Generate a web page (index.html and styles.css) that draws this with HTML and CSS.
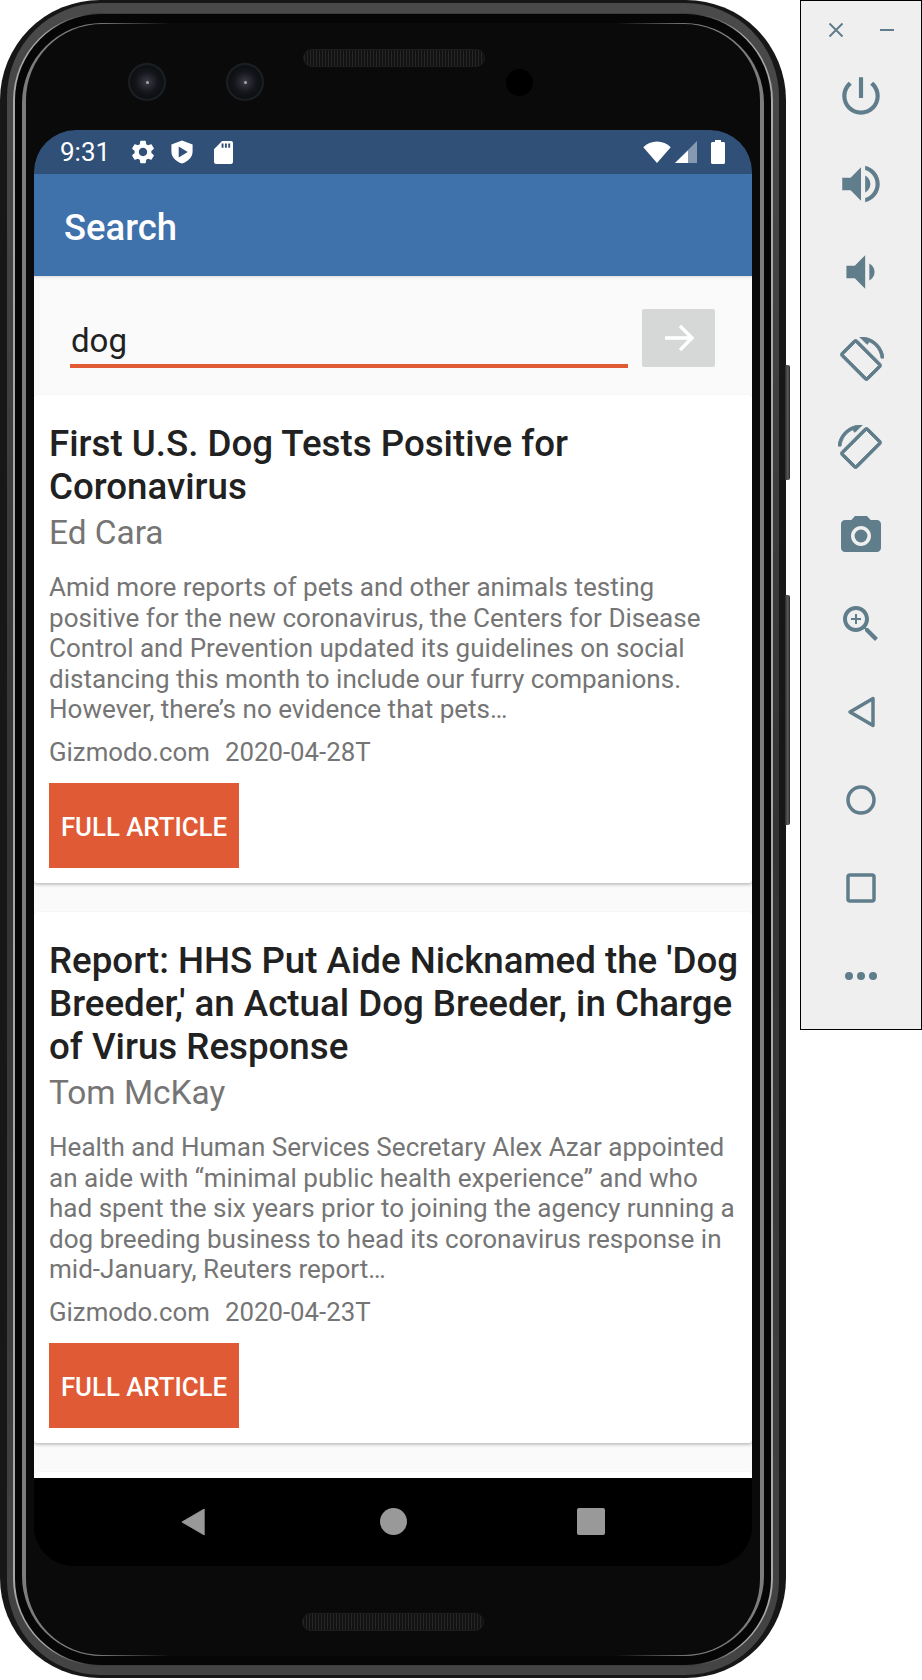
FILE: index.html
```html
<!DOCTYPE html>
<html lang="en">
<head>
<meta charset="utf-8">
<title>Search</title>
<link rel="stylesheet" href="styles.css">
</head>
<body>
<div class="phone">
  <div class="band-b">
    <div class="band-c">
      <div class="band-d">
        <div class="band-e">
          <div class="face">
            <div class="sensors">
              <div class="lens lens-a"><span class="glint"></span></div>
              <div class="lens lens-b"><span class="glint"></span></div>
              <div class="speaker speaker-top"></div>
              <div class="proximity"></div>
            </div>
            <div class="screen">
              <div class="status">
                <span class="time">9:31</span>
                <svg class="st gear" viewBox="0 0 24 24"><path d="M19.14 12.94c.04-.3.06-.61.06-.94 0-.32-.02-.64-.07-.94l2.03-1.58c.18-.14.23-.41.12-.61l-1.92-3.32c-.12-.22-.37-.29-.59-.22l-2.39.96c-.5-.38-1.03-.7-1.62-.94l-.36-2.54c-.04-.24-.24-.41-.48-.41h-3.84c-.24 0-.43.17-.47.41l-.36 2.54c-.59.24-1.13.57-1.62.94l-2.39-.96c-.22-.08-.47 0-.59.22L2.74 8.87c-.12.21-.08.47.12.61l2.03 1.58c-.05.3-.09.63-.09.94s.02.64.07.94l-2.03 1.58c-.18.14-.23.41-.12.61l1.92 3.32c.12.22.37.29.59.22l2.39-.96c.5.38 1.03.7 1.62.94l.36 2.54c.05.24.24.41.48.41h3.84c.24 0 .44-.17.47-.41l.36-2.54c.59-.24 1.13-.56 1.62-.94l2.39.96c.22.08.47 0 .59-.22l1.92-3.32c.12-.22.07-.47-.12-.61l-2.01-1.58zM12 15.6c-1.98 0-3.6-1.62-3.6-3.6s1.62-3.6 3.6-3.6 3.6 1.62 3.6 3.6-1.62 3.6-3.6 3.6z"/></svg>
                <svg class="st shield" viewBox="0 0 24 24"><path fill-rule="evenodd" d="M12 0.6 22.6 4.4v7.2c0 5.6-4.4 10-10.6 12-6.2-2-10.6-6.4-10.6-12V4.400zM8.700 6.600v10.800l9-5.400z"/></svg>
                <svg class="st sd" viewBox="0 0 20 24"><path d="M18 0H8.500L0 8.500V22c0 1.100.9 2 2 2h16c1.100 0 2-.9 2-2V2c0-1.100-.9-2-2-2zM10 7H8V2.500h2zm3.500 0h-2V2.500h2zm3.500 0h-2V2.500h2z" fill-rule="evenodd"/></svg>
                <span class="status-gap"></span>
                <svg class="st wifi" viewBox="0 0 28 22"><path d="M14 22 .3 6.200C3.900 2.500 8.700.4 14 .4s10.100 2.100 13.700 5.800z"/></svg>
                <svg class="st signal" viewBox="0 0 22 22"><path class="faded" d="M22 0v22H0z"/><path d="M13 9.500V22H0z"/></svg>
                <svg class="st battery" viewBox="0 0 14 24"><path d="M4 0h6v2h2.500c.8 0 1.500.7 1.500 1.500V22.500c0 .8-.7 1.500-1.500 1.500h-11C.7 24 0 23.300 0 22.500V3.500C0 2.700.7 2 1.500 2H4z"/></svg>
              </div>
              <header class="appbar">Search</header>
              <main class="content">
                <div class="search">
                  <div class="field">dog</div>
                  <button class="go" type="button">
                    <svg class="go-arrow" viewBox="0 0 32 32"><path d="M2 16h27M17 4l12 12-12 12"/></svg>
                  </button>
                </div>
                <article class="card">
                  <h2 class="title">First U.S. Dog Tests Positive for Coronavirus</h2>
                  <p class="author">Ed Cara</p>
                  <p class="desc">Amid more reports of pets and other animals testing positive for the new coronavirus, the Centers for Disease Control and Prevention updated its guidelines on social distancing this month to include our furry companions. However, there’s no evidence that pets…</p>
                  <p class="meta"><span>Gizmodo.com</span><span>2020-04-28T</span></p>
                  <a class="full" href="#">FULL ARTICLE</a>
                </article>
                <article class="card">
                  <h2 class="title">Report: HHS Put Aide Nicknamed the 'Dog Breeder,' an Actual Dog Breeder, in Charge of Virus Response</h2>
                  <p class="author">Tom McKay</p>
                  <p class="desc">Health and Human Services Secretary Alex Azar appointed an aide with “minimal public health experience” and who had spent the six years prior to joining the agency running a dog breeding business to head its coronavirus response in mid-January, Reuters report…</p>
                  <p class="meta"><span>Gizmodo.com</span><span>2020-04-23T</span></p>
                  <a class="full" href="#">FULL ARTICLE</a>
                </article>
                <div class="card card-next"></div>
              </main>
              <nav class="softkeys">
                <svg class="key" viewBox="0 0 28 32"><path d="M26 1.500V30.500L1 16z" stroke-linejoin="round"/></svg>
                <span class="key-circle"></span>
                <span class="key-square"></span>
              </nav>
            </div>
            <div class="chin"><div class="speaker"></div></div>
          </div>
        </div>
      </div>
    </div>
  </div>
</div>
<div class="rail">
  <span class="hw hw-power"></span>
  <span class="hw hw-volume"></span>
</div>
<aside class="tools">
  <div class="tools-head">
    <svg class="tiny" viewBox="0 0 16 16"><path d="M1.500 1.500l13 13M14.500 1.500l-13 13"/></svg>
    <svg class="tiny" viewBox="0 0 16 16"><path d="M1 8h14"/></svg>
  </div>
  <div class="tool"><svg class="ic ic-50" viewBox="0 0 24 24"><path d="M13 3h-2v10h2V3zm4.830 2.170l-1.420 1.420C17.990 7.860 19 9.810 19 12c0 3.870-3.130 7-7 7s-7-3.130-7-7c0-2.190 1.010-4.140 2.580-5.420L6.170 5.170C4.230 6.820 3 9.260 3 12c0 4.970 4.030 9 9 9s9-4.030 9-9c0-2.740-1.230-5.180-3.170-6.830z"/></svg></div>
  <div class="tool"><svg class="ic ic-50" viewBox="0 0 24 24"><path d="M3 9v6h4l5 5V4L7 9H3zm13.500 3c0-1.770-1.020-3.290-2.500-4.030v8.050c1.480-.73 2.500-2.250 2.500-4.020zM14 3.230v2.060c2.890.86 5 3.540 5 6.710s-2.110 5.850-5 6.710v2.060c4.010-.91 7-4.490 7-8.770s-2.990-7.860-7-8.770z"/></svg></div>
  <div class="tool"><svg class="ic ic-50" viewBox="0 0 24 24"><path d="M18.500 12c0-1.770-1.020-3.290-2.500-4.030v8.050c1.480-.73 2.500-2.250 2.500-4.020zM5 9v6h4l5 5V4L9 9H5z"/></svg></div>
  <div class="tool"><svg class="ic ic-46 rotor" viewBox="0 0 24 24"><path d="M16.480 2.520c3.270 1.550 5.610 4.720 5.970 8.480h1.500C23.440 4.840 18.290 0 12 0l-.66.030 3.810 3.810 1.330-1.320zm-6.250-.77c-.59-.59-1.540-.59-2.120 0L1.750 8.110c-.59.59-.59 1.540 0 2.120l12.020 12.020c.59.59 1.540.59 2.120 0l6.360-6.360c.59-.59.59-1.540 0-2.120L10.230 1.750zm4.600 19.440L2.810 9.170l6.360-6.360 12.020 12.020-6.360 6.360z"/></svg></div>
  <div class="tool"><svg class="ic ic-46 rotor flip" viewBox="0 0 24 24"><path d="M16.480 2.520c3.270 1.550 5.610 4.720 5.970 8.480h1.500C23.440 4.840 18.290 0 12 0l-.66.030 3.810 3.810 1.330-1.320zm-6.250-.77c-.59-.59-1.540-.59-2.120 0L1.750 8.110c-.59.59-.59 1.540 0 2.120l12.020 12.020c.59.59 1.540.59 2.120 0l6.360-6.360c.59-.59.59-1.540 0-2.120L10.230 1.750zm4.600 19.440L2.810 9.170l6.360-6.360 12.020 12.020-6.360 6.360z"/></svg></div>
  <div class="tool"><svg class="ic ic-48" viewBox="0 0 24 24"><circle cx="12" cy="12" r="3.200"/><path d="M9 2L7.170 4H4c-1.100 0-2 .9-2 2v12c0 1.100.9 2 2 2h16c1.100 0 2-.9 2-2V6c0-1.100-.9-2-2-2h-3.170L15 2H9zm3 15c-2.760 0-5-2.240-5-5s2.240-5 5-5 5 2.240 5 5-2.240 5-5 5z"/></svg></div>
  <div class="tool"><svg class="ic ic-48" viewBox="0 0 24 24"><path d="M15.500 14h-.79l-.28-.27C15.410 12.590 16 11.110 16 9.500 16 5.910 13.090 3 9.500 3S3 5.910 3 9.500 5.910 16 9.500 16c1.610 0 3.090-.59 4.230-1.570l.27.28v.79l5 4.990L20.490 19l-4.990-5zm-6 0C7.010 14 5 11.990 5 9.500S7.010 5 9.500 5 14 7.010 14 9.500 11.990 14 9.500 14z"/><path d="M12 10h-2v2H9v-2H7V9h2V7h1v2h2v1z"/></svg></div>
  <div class="tool"><svg class="ic ic-48 line" viewBox="0 0 48 48"><path d="M13 24 36 10.500V37.500z"/></svg></div>
  <div class="tool"><svg class="ic ic-48 line" viewBox="0 0 48 48"><circle cx="24" cy="24" r="13"/></svg></div>
  <div class="tool"><svg class="ic ic-48 line" viewBox="0 0 48 48"><rect x="11" y="11" width="26" height="26" rx="2"/></svg></div>
  <div class="tool"><svg class="ic ic-48" viewBox="0 0 48 48"><circle cx="12" cy="24" r="4"/><circle cx="24" cy="24" r="4"/><circle cx="36" cy="24" r="4"/></svg></div>
</aside>
</body>
</html>
```
FILE: styles.css
```css
* { box-sizing: border-box; }
html, body { margin: 0; background: #fff; }
body {
  display: flex;
  align-items: flex-start;
  width: 922px;
  height: 1680px;
  overflow: hidden;
  font-family: Roboto, "Liberation Sans", sans-serif;
}

/* Handset shell: nested bands */
.phone {
  flex: none;
  width: 786px;
  height: 1678px;
  padding: 3px 7px;
  border-radius: 100px;
  background: #171717;
}
.band-b {
  height: 100%;
  padding: 10px 6px 9px;
  border-radius: 94px;
  background: linear-gradient(#4a4a4a, #333 50%, #444);
}
.band-c {
  height: 100%;
  padding: 1px 2px;
  border-radius: 88px;
  background: linear-gradient(to right, #a8a8a8 0, #a8a8a8 4%, #3c3c3c 10%, #3c3c3c 90%, #a8a8a8 96%, #a8a8a8 100%);
}
.band-d {
  height: 100%;
  padding: 9px 7px;
  border-radius: 86px;
  background: #060606;
}
.band-e {
  height: 100%;
  padding: 1px 4px;
  border-radius: 80px;
  background: linear-gradient(to right, #7c7c7c 0, #7c7c7c 10%, #0a0a0a 20%, #0a0a0a 80%, #7c7c7c 90%, #7c7c7c 100%);
}
.face {
  display: flex;
  flex-direction: column;
  height: 100%;
  padding: 0 8px;
  border-radius: 76px;
  background: #0a0a0a;
}

.sensors {
  flex: none;
  display: flex;
  align-items: flex-start;
  height: 106px;
}
.lens {
  flex: none;
  display: flex;
  align-items: center;
  justify-content: center;
  width: 38px;
  height: 38px;
  margin-top: 39px;
  border-radius: 50%;
  background: radial-gradient(circle, #3a3a44 0, #14161b 40%, #0d0f12 60%, #1b2024 66%, #1b2024 100%);
}
.lens-a { margin-left: 94px; }
.lens-b { margin-left: 60px; }
.glint {
  width: 3px;
  height: 3px;
  border-radius: 50%;
  background: #a8a8a8;
}
.speaker {
  flex: none;
  width: 182px;
  height: 18px;
  border: 1px solid #1c1c1c;
  border-radius: 9px;
  background: repeating-linear-gradient(90deg, #262626 0, #262626 1px, #121212 1px, #121212 3px);
}
.speaker-top { margin: 25px 0 0 39px; }
.proximity {
  flex: none;
  width: 27px;
  height: 27px;
  margin: 45px 0 0 21px;
  border-radius: 50%;
  background: #000;
}

.chin {
  flex: 1;
  display: flex;
  justify-content: center;
  padding-top: 47px;
}

/* Device screen */
.screen {
  flex: none;
  display: flex;
  flex-direction: column;
  height: 1436px;
  overflow: hidden;
  border-radius: 42px 42px 40px 40px;
  background: #000;
}
.status {
  flex: none;
  display: flex;
  align-items: center;
  height: 44px;
  padding: 0 27px 0 26px;
  background: #305078;
  color: #fff;
}
.time { font-size: 26px; margin-right: 19px; }
.st { flex: none; fill: #fff; display: block; }
.gear { width: 28px; height: 28px; margin-right: 13px; }
.shield { width: 24px; height: 24px; margin-right: 20px; }
.sd { width: 19px; height: 23px; }
.status-gap { flex: 1; }
.wifi { width: 28px; height: 22px; margin-right: 4px; }
.signal { width: 22px; height: 22px; margin-right: 14px; }
.faded { opacity: .42; }
.battery { width: 14px; height: 24px; }

.appbar {
  flex: none;
  height: 102px;
  padding: 0 30px;
  background: #3f71ab;
  color: #fff;
  font-size: 36.400px;
  font-weight: 500;
  line-height: 108px;
}

.content {
  flex: none;
  height: 1202px;
  overflow: hidden;
  background: #fafafa;
}
.search {
  display: flex;
  height: 119px;
  padding: 33px 37px 0 36px;
  box-shadow: inset 0 3px 3px -2px rgba(0,0,0,.12);
}
.field {
  flex: none;
  width: 558px;
  height: 59px;
  padding: 10px 0 0 1px;
  border-bottom: 4px solid #e05a35;
  color: #212121;
  font-size: 33px;
  line-height: 44px;
}
.go {
  flex: none;
  display: flex;
  align-items: center;
  justify-content: center;
  width: 73px;
  height: 58px;
  margin-left: 14px;
  padding: 0;
  border: 0;
  border-radius: 2px;
  background: #d6d8d8;
}
.go-arrow {
  width: 32px;
  height: 32px;
  fill: none;
  stroke: #fff;
  stroke-width: 3.400;
}

.card {
  margin-bottom: 29px;
  padding: 27px 12px 15px 15px;
  border-radius: 3px;
  background: #fff;
  box-shadow: 0 2px 3px rgba(0,0,0,.22), 0 0 1px rgba(0,0,0,.08);
}
.card-next { height: 80px; margin: 0; }
.title {
  margin: 0;
  color: #212121;
  font-size: 36.700px;
  font-weight: 500;
  line-height: 43px;
}
.author {
  margin: 4px 0 19px;
  color: #757575;
  font-size: 33.400px;
  line-height: 41px;
}
.desc {
  margin: 0 0 9px;
  color: #757575;
  font-size: 26.050px;
  line-height: 30.600px;
}
.meta {
  display: flex;
  gap: 15px;
  margin: 0 0 13px;
  color: #757575;
  font-size: 25.800px;
  line-height: 36px;
}
.full {
  display: block;
  width: 190px;
  height: 85px;
  background: #e05a35;
  color: #fff;
  font-size: 25.800px;
  font-weight: 500;
  line-height: 89px;
  text-align: center;
  text-decoration: none;
}

.softkeys {
  flex: none;
  display: flex;
  align-items: flex-start;
  height: 88px;
  padding: 29px 0 0 147px;
  background: #000;
}
.key { width: 25px; height: 30px; margin-right: 174px; fill: #999; stroke: #999; }
.key-circle {
  flex: none;
  width: 27px;
  height: 27px;
  margin: 1px 170px 0 0;
  border-radius: 50%;
  background: #999;
}
.key-square {
  flex: none;
  width: 28px;
  height: 27px;
  margin-top: 1px;
  border-radius: 2px;
  background: #999;
}

/* Hardware buttons */
.rail {
  flex: none;
  display: flex;
  flex-direction: column;
  width: 14px;
  padding-top: 365px;
}
.hw {
  width: 5px;
  margin-left: -1px;
  border-radius: 0 2px 2px 0;
  background: linear-gradient(to right, #2c2c2c, #5c5c5c 60%, #222);
}
.hw-power { height: 115px; }
.hw-volume { height: 230px; margin-top: 115px; }

/* Emulator toolbar */
.tools {
  flex: none;
  width: 122px;
  height: 1030px;
  border: 1px solid #000;
  background: #efefef;
}
.tools-head {
  display: flex;
  justify-content: space-between;
  height: 51px;
  padding: 21px 26px 0 27px;
}
.tiny {
  width: 16px;
  height: 16px;
  fill: none;
  stroke: #607d8b;
  stroke-width: 2;
}
.tool {
  display: flex;
  align-items: center;
  justify-content: center;
  height: 88px;
}
.ic { display: block; fill: #607d8b; }
.ic-50 { width: 50px; height: 50px; }
.ic-46 { width: 46px; height: 46px; }
.ic-48 { width: 48px; height: 48px; }
.rotor { stroke: #607d8b; stroke-width: .5; }
.flip { transform: scaleX(-1); }
.line { fill: none; stroke: #607d8b; stroke-width: 3.500; stroke-linejoin: round; }
```
